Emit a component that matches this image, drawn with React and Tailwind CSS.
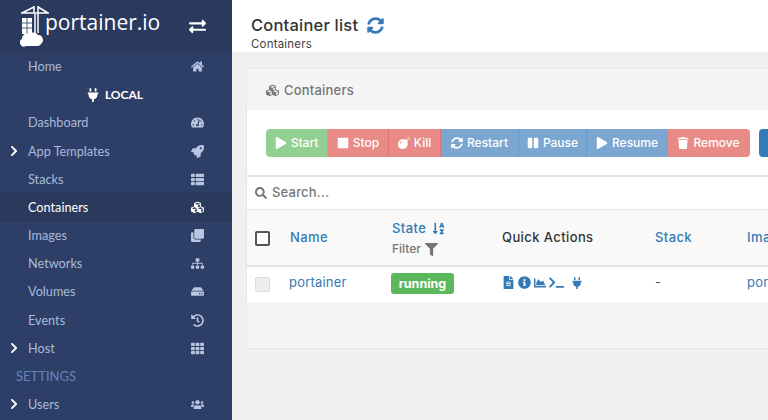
import React from 'react'
import {
  FaBomb, FaChartArea, FaChevronRight, FaClone, FaCubes, FaExchangeAlt, FaFileAlt, FaFilter, FaHdd, FaHistory,
  FaHome, FaInfoCircle, FaPause, FaPlay, FaPlug, FaRocket, FaSearch, FaSitemap, FaSortAlphaDown, FaStop,
  FaSyncAlt, FaTerminal, FaTachometerAlt, FaTh, FaThList, FaTrash, FaUsers,
} from 'react-icons/fa'

const menu = [
  { label: 'Home', icon: FaHome },
  { local: true },
  { label: 'Dashboard', icon: FaTachometerAlt },
  { label: 'App Templates', icon: FaRocket, arrow: true },
  { label: 'Stacks', icon: FaThList },
  { label: 'Containers', icon: FaCubes, active: true },
  { label: 'Images', icon: FaClone },
  { label: 'Networks', icon: FaSitemap },
  { label: 'Volumes', icon: FaHdd },
  { label: 'Events', icon: FaHistory },
  { label: 'Host', icon: FaTh, arrow: true },
  { heading: 'SETTINGS' },
  { label: 'Users', icon: FaUsers, arrow: true },
]

const actions = [
  { label: 'Start', icon: FaPlay, color: 'w-[62px] bg-[#92cf92] border-[#86c486] rounded-l-[4px]' },
  { label: 'Stop', icon: FaStop, color: 'w-[61px] bg-[#e88b87] border-[#dd7470]' },
  { label: 'Kill', icon: FaBomb, color: 'w-[52px] bg-[#e88b87] border-[#dd7470]' },
  { label: 'Restart', icon: FaSyncAlt, color: 'w-[78px] bg-[#7aa6d0] border-[#659ac9]' },
  { label: 'Pause', icon: FaPause, color: 'w-[68px] bg-[#7aa6d0] border-[#659ac9]' },
  { label: 'Resume', icon: FaPlay, color: 'w-[81px] bg-[#7aa6d0] border-[#7aa6d0]' },
  { label: 'Remove', icon: FaTrash, color: 'w-[82px] bg-[#e88b87] border-[#e88b87] rounded-r-[4px]' },
]

function MenuRow({ item }) {
  if (item.local) {
    return (
      <div className="h-[28.17px] flex items-center justify-center gap-[5px] text-white font-bold text-[12px] pr-[3px]">
        <FaPlug className="text-[14px]" />
        LOCAL
      </div>
    )
  }
  if (item.heading) {
    return (
      <div className="h-[28.17px] flex items-center pl-4 text-[#6384bb] text-[13px]">{item.heading}</div>
    )
  }
  const Icon = item.icon
  return (
    <div className={`h-[28.17px] flex items-center text-[12.7px] relative pl-7 pr-[28px] justify-between ${item.active ? 'bg-[#2b3a5c] text-white' : 'text-[#a9bada]'}`}>
      {item.arrow && <FaChevronRight className="absolute left-[8px] top-[8px] text-white text-[12px]" />}
      <span>{item.label}</span>
      <Icon className={`text-[13px] ${item.active ? 'text-white' : 'text-[#b7c6e2]'}`} />
    </div>
  )
}

function Logo() {
  return (
    <div className="flex items-center pl-5">
      <svg width="30" height="42" viewBox="0 0 30 42" className="text-white" fill="none">
        <path d="M1 8 H29 M18 1 V28 M14 1 V8 M14 2 L2 8 M18 2 L28 8 M15 9 V28" stroke="currentColor" strokeWidth="1.5" />
        <path d="M2 13h10v16H2z" fill="currentColor" />
        <path d="M2 18h10M2 23h10M7 13v16" stroke="#2a3a5f" strokeWidth="0.8" />
        <path d="M6 41a4 4 0 0 1-4-7 5 5 0 0 1 7-5 6 6 0 0 1 9 1 5 5 0 0 1 3 9 4 4 0 0 1-4 2z" fill="currentColor" />
      </svg>
      <span className="text-white text-[21px] -ml-[5px] -mt-[7px] font-['Open_Sans',sans-serif] font-normal">portainer.io</span>
    </div>
  )
}

export default function App() {
  return (
    <div className="w-[768px] h-[420px] overflow-hidden flex font-['Lato',sans-serif]">
      <aside className="w-[232px] shrink-0 bg-[#2d3f66]">
        <div className="h-[52.6px] bg-[#2a3a5f] flex items-center justify-between pr-[26px]">
          <Logo />
          <FaExchangeAlt className="text-white text-[17px]" />
        </div>
        {menu.map((item, i) => <MenuRow key={i} item={item} />)}
      </aside>

      <main className="flex-1 min-w-0 bg-[#f0f0f0] font-['Inter',sans-serif]">
        <div className="h-[52px] bg-white pl-[19px] pt-[15px]">
          <div className="flex items-center gap-[9px] text-[16.5px] leading-[20px] font-medium text-[#333] tracking-[0.2px]">
            Container list
            <FaSyncAlt className="text-[#337ab7] text-[17px]" />
          </div>
          <div className="text-[11.5px] leading-[14px] mt-[2px] text-[#444] tracking-[0.2px]">Containers</div>
        </div>

        <div className="ml-[14px] mt-[16px] w-[560px] h-[281px] bg-[#f5f5f5] border border-[#e7e7e7] border-r-0">
          <div className="h-[41px] flex items-center pl-[19px] pt-[2px] gap-[5px] text-[#767676] text-[13px] font-medium tracking-[0.2px]">
            <FaCubes className="text-[13px]" />
            Containers
          </div>

          <div className="h-[67px] bg-white border-b-2 border-[#e3e3e3] flex items-center pl-[19px]">
            <div className="flex shrink-0">
              {actions.map((a) => {
                const Icon = a.icon
                return (
                  <div key={a.label} className={`h-[28px] flex items-center justify-center gap-[4px] border-r text-white text-[12px] font-medium ${a.color}`}>
                    <Icon className="text-[12px]" />
                    {a.label}
                  </div>
                )
              })}
            </div>
            <div className="ml-[9px] w-[40px] h-[28px] shrink-0 bg-[#337ab7] rounded-l-[4px]" />
          </div>

          <div className="h-[32px] bg-white flex items-center pl-[8px] gap-[5px] text-[#767676] text-[13px] font-medium tracking-[0.2px]">
            <FaSearch className="text-[12px]" />
            Search...
          </div>

          <div className="h-[58px] bg-[#f9f9f9] border-y-2 border-[#e3e3e3] border-t-[#eeeeee] flex items-center text-[13px] font-medium tracking-[0.4px]">
            <div className="w-[43px] shrink-0 pl-[8px]">
              <div className="w-[15px] h-[15px] border-2 border-[#555] rounded-[2px] bg-white" />
            </div>
            <div className="w-[102px] shrink-0 text-[#337ab7]">Name</div>
            <div className="w-[110px] shrink-0">
              <div className="flex items-center gap-[6px] text-[#337ab7] pt-[1px]">State <FaSortAlphaDown className="text-[13px]" /></div>
              <div className="flex items-center gap-[4px] text-[#767676] text-[12px] mt-[2px] tracking-normal">Filter <FaFilter className="text-[13px]" /></div>
            </div>
            <div className="w-[153px] shrink-0 text-[#333]">Quick Actions</div>
            <div className="w-[92px] shrink-0 text-[#337ab7]">Stack</div>
            <div className="text-[#337ab7] whitespace-nowrap">Image</div>
          </div>

          <div className="h-[35px] bg-white flex items-center text-[13px] tracking-[0.2px]">
            <div className="w-[42px] shrink-0 pl-[8px]">
              <div className="w-[15px] h-[15px] border border-[#dcdcdc] rounded-[2px] bg-[#eeeeee]" />
            </div>
            <div className="w-[102px] shrink-0 -mt-[4px] text-[#337ab7]">portainer</div>
            <div className="w-[110px] shrink-0 -mt-[2px]">
              <span className="block bg-[#5cb85c] text-white font-bold rounded-[3px] w-[63px] h-[21px] leading-[21px] text-center text-[12.5px] tracking-normal">running</span>
            </div>
            <div className="w-[154px] shrink-0 -mt-[4px] pl-[1px] flex items-center gap-[3px] text-[#337ab7] text-[13px]">
              <FaFileAlt />
              <FaInfoCircle />
              <FaChartArea className="text-[12px]" />
              <FaTerminal className="text-[15px]" />
              <FaPlug className="text-[12px] ml-[4px]" />
            </div>
            <div className="w-[92px] shrink-0 -mt-[4px] text-[#555]">-</div>
            <div className="-mt-[4px] text-[#337ab7] whitespace-nowrap">portainer/portainer</div>
          </div>
        </div>
      </main>
    </div>
  )
}
